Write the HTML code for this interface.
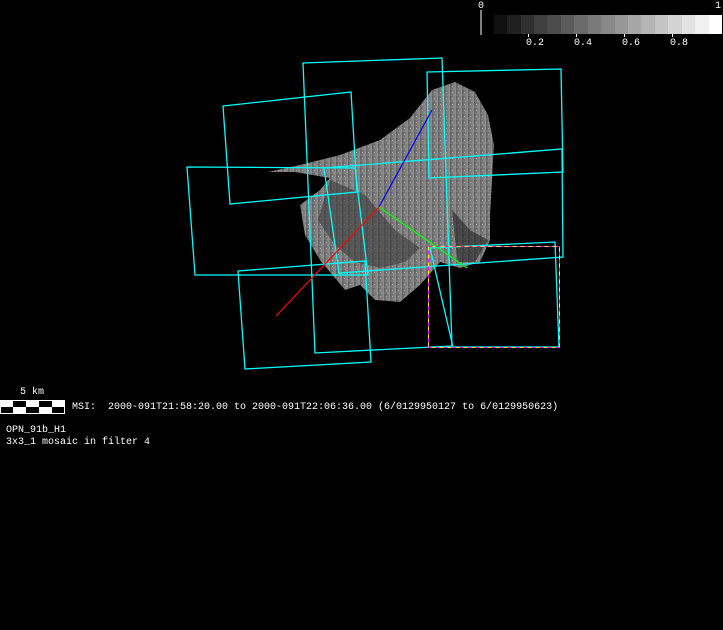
<!DOCTYPE html>
<html><head><meta charset="utf-8"><style>
html,body{margin:0;padding:0;background:#000;width:723px;height:630px;overflow:hidden}
.t{position:absolute;color:#fff;font-family:"Liberation Mono",monospace;font-size:10px;line-height:11px;white-space:pre}
</style></head><body>
<svg width="723" height="630" style="position:absolute;left:0;top:0">
<defs>
<linearGradient id="g" x1="0" y1="0" x2="1" y2="0.3">
<stop offset="0" stop-color="#5a5a5a"/><stop offset="0.5" stop-color="#787878"/><stop offset="1" stop-color="#8c8c8c"/>
</linearGradient>
<pattern id="dots" width="6" height="6" patternUnits="userSpaceOnUse"><rect width="6" height="6" fill="url(#g)"/><rect x="2" y="2" width="1" height="1" fill="#aaa"/></pattern>
</defs>
<g>
<rect x="494" y="15" width="14" height="19" fill="#111"/>
<rect x="507" y="15" width="14" height="19" fill="#202020"/>
<rect x="521" y="15" width="14" height="19" fill="#303030"/>
<rect x="534" y="15" width="14" height="19" fill="#404040"/>
<rect x="547" y="15" width="14" height="19" fill="#4b4b4b"/>
<rect x="561" y="15" width="14" height="19" fill="#5b5b5b"/>
<rect x="574" y="15" width="14" height="19" fill="#6b6b6b"/>
<rect x="588" y="15" width="14" height="19" fill="#7a7a7a"/>
<rect x="601" y="15" width="14" height="19" fill="#888"/>
<rect x="615" y="15" width="14" height="19" fill="#979797"/>
<rect x="628" y="15" width="14" height="19" fill="#a6a6a6"/>
<rect x="641" y="15" width="14" height="19" fill="#b5b5b5"/>
<rect x="655" y="15" width="14" height="19" fill="#c4c4c4"/>
<rect x="668" y="15" width="14" height="19" fill="#d3d3d3"/>
<rect x="682" y="15" width="14" height="19" fill="#e2e2e2"/>
<rect x="695" y="15" width="14" height="19" fill="#f0f0f0"/>
<rect x="709" y="15" width="13" height="19" fill="#fff"/>
<line x1="481" y1="10" x2="481" y2="35" stroke="#fff"/>
<line x1="528.5" y1="34" x2="528.5" y2="37" stroke="#fff"/>
<line x1="576.5" y1="34" x2="576.5" y2="37" stroke="#fff"/>
<line x1="624.5" y1="34" x2="624.5" y2="37" stroke="#fff"/>
<line x1="672.5" y1="34" x2="672.5" y2="37" stroke="#fff"/>
</g>
<path d="M268,172 L300,165 L340,155 L380,140 L410,118 L432,90 L455,82 L475,92 L488,115 L494,145 L492,180 L490,215 L490,240 L480,262 L460,268 L440,262 L420,285 L400,302 L375,300 L360,285 L345,290 L320,260 L305,235 L300,205 L320,190 L330,178 L295,172 Z" fill="url(#dots)"/>
<path d="M330,180 L365,195 L395,230 L420,248 L405,262 L380,268 L355,262 L335,245 L318,220 Z" fill="#3a3a3a" opacity="0.6"/>
<path d="M452,210 L470,230 L488,240 L475,262 L458,262 L455,240 Z" fill="#222" opacity="0.6"/>
<g fill="none" stroke="#0ff" stroke-width="1.3">
<polygon points="303,63 442,58 452,346 315,353"/>
<polygon points="223,106 351,92 357,192 230,204"/>
<polygon points="187,167 355,168 368,275 195,275"/>
<polygon points="238,271 365,261 371,362 245,369"/>
<polygon points="427,72 561,69 563,172 429,178"/>
<polygon points="324,168 562,149 563,257 339,273"/>
<polygon points="430,248 555,242 559,347 453,347"/>
</g>
<rect x="428.5" y="246.5" width="131" height="101" fill="none" stroke="#ff0" stroke-width="1"/>
<rect x="428.5" y="246.5" width="131" height="101" fill="none" stroke="#f0f" stroke-width="1" stroke-dasharray="4 4"/>
<line x1="379" y1="207" x2="432" y2="110" stroke="#00f" stroke-width="1.2"/>
<line x1="379" y1="207" x2="276" y2="316" stroke="#f00" stroke-width="1.2"/>
<line x1="379" y1="207" x2="467" y2="268" stroke="#0f0" stroke-width="1.2"/>
<rect x="0.5" y="400.5" width="64" height="13" fill="#000" stroke="#fff"/>
<rect x="0" y="400" width="13" height="7" fill="#fff"/>
<rect x="26" y="400" width="13" height="7" fill="#fff"/>
<rect x="52" y="400" width="13" height="7" fill="#fff"/>
<rect x="13" y="407" width="13" height="7" fill="#fff"/>
<rect x="39" y="407" width="13" height="7" fill="#fff"/>
</svg>
<div class="t" style="left:478px;top:1px">0</div>
<div class="t" style="left:715px;top:1px">1</div>
<div class="t" style="left:526px;top:38px">0.2</div>
<div class="t" style="left:574px;top:38px">0.4</div>
<div class="t" style="left:622px;top:38px">0.6</div>
<div class="t" style="left:670px;top:38px">0.8</div>
<div class="t" style="left:20px;top:387px">5 km</div>
<div class="t" style="left:72px;top:402px">MSI:  2000-091T21:58:20.00 to 2000-091T22:06:36.00 (6/0129950127 to 6/0129950623)</div>
<div class="t" style="left:6px;top:425px">OPN_91b_H1</div>
<div class="t" style="left:6px;top:437px">3x3_1 mosaic in filter 4</div>
</body></html>
